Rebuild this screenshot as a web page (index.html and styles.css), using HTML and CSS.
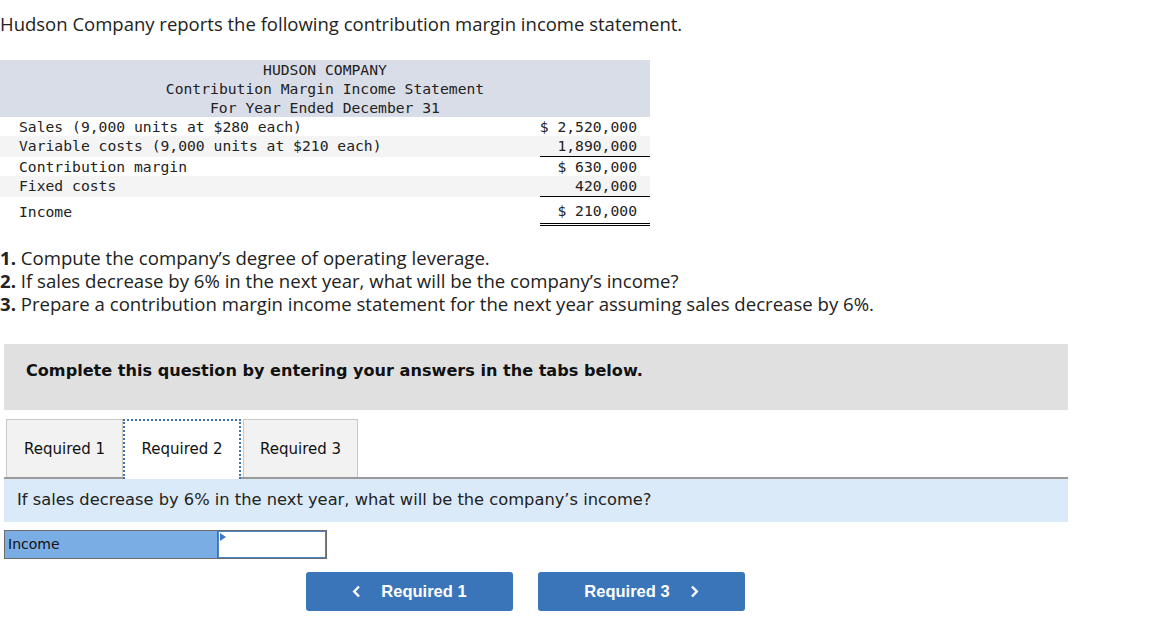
FILE: index.html
```html
<!DOCTYPE html>
<html>
<head>
<meta charset="utf-8">
<link rel="stylesheet" href="styles.css">
</head>
<body>
<p class="intro">Hudson Company reports the following contribution margin income statement.</p>
<table class="stmt">
  <thead>
    <tr><th colspan="2">HUDSON COMPANY<br>Contribution Margin Income Statement<br>For Year Ended December 31</th></tr>
  </thead>
  <tbody>
    <tr><td class="lbl">Sales (9,000 units at $280 each)</td><td class="amt">$ 2,520,000</td></tr>
    <tr class="alt"><td class="lbl">Variable costs (9,000 units at $210 each)</td><td class="amt under">1,890,000</td></tr>
    <tr><td class="lbl">Contribution margin</td><td class="amt">$ 630,000</td></tr>
    <tr class="alt"><td class="lbl">Fixed costs</td><td class="amt under">420,000</td></tr>
    <tr class="last"><td class="lbl">Income</td><td class="amt dbl">$ 210,000</td></tr>
  </tbody>
</table>
<ol class="reqs">
  <li><b>1.</b> Compute the company’s degree of operating leverage.</li>
  <li><b>2.</b> If sales decrease by 6% in the next year, what will be the company’s income?</li>
  <li><b>3.</b> Prepare a contribution margin income statement for the next year assuming sales decrease by 6%.</li>
</ol>
<div class="quiz">
  <div class="banner">Complete this question by entering your answers in the tabs below.</div>
  <div class="tabs">
    <div class="tab t1">Required 1</div>
    <div class="tab t2 active">Required 2</div>
    <div class="tab t3">Required 3</div>
  </div>
  <div class="prompt">If sales decrease by 6% in the next year, what will be the company’s income?</div>
  <div class="answer">
    <div class="alabel">Income</div>
    <div class="ainput"><span class="flag"></span></div>
  </div>
  <div class="nav">
    <button class="btn prev"><svg class="chev" width="9" height="13" viewBox="0 0 9 13"><path d="M7 1.5 L2.2 6.5 L7 11.5" fill="none" stroke="#fff" stroke-width="2.4"/></svg>Required 1</button>
    <button class="btn next">Required 3<svg class="chev" width="9" height="13" viewBox="0 0 9 13"><path d="M2 1.5 L6.8 6.5 L2 11.5" fill="none" stroke="#fff" stroke-width="2.4"/></svg></button>
  </div>
</div>
</body>
</html>
```
FILE: styles.css
```css
body {
  margin: 0;
  background: #fff;
  color: #222;
  font-family: "Open Sans", "Liberation Sans", Arial, sans-serif;
}
.intro {
  margin: 0;
  padding-top: 13px;
  font-size: 18.5px;
  line-height: 22px;
  color: #222;
}
.stmt {
  margin-top: 25px;
  width: 650px;
  border-collapse: collapse;
  font-family: "DejaVu Sans Mono", "Liberation Mono", monospace;
  font-size: 14.7px;
  color: #222;
}
.stmt th {
  background: #d9dde7;
  font-weight: normal;
  line-height: 19px;
  padding: 0;
  text-align: center;
}
.stmt td {
  padding: 0;
  line-height: 19px;
  height: 19px;
  white-space: nowrap;
}
.stmt tr.alt td { background: #f4f4f4; line-height: 20px; height: 20px; }
.stmt .lbl { padding-left: 19px; }
.stmt .amt {
  text-align: right;
  width: 97px;
  padding-right: 13px;
}
.stmt .under { border-bottom: 1px solid #000; }
.stmt tr.last td { padding-top: 4px; padding-bottom: 3px; }
.stmt .dbl { border-bottom: 3px double #000; }
.reqs {
  list-style: none;
  margin: 20px 0 0;
  padding: 0;
  font-size: 18.6px;
  line-height: 23px;
  color: #222;
}
.reqs b { font-weight: bold; }
.quiz {
  margin: 29px 0 0 4px;
  width: 1064px;
  font-family: "DejaVu Sans", Verdana, sans-serif;
}
.banner {
  background: #e0e0e0;
  height: 66px;
  box-sizing: border-box;
  padding: 16px 0 0 22px;
  font-weight: bold;
  font-size: 16.1px;
  line-height: 22px;
  color: #111;
}
.tabs {
  display: flex;
  margin-top: 9px;
  padding-left: 2px;
  border-bottom: 2px solid #9a9a9a;
  height: 58px;
}
.tab {
  box-sizing: border-box;
  height: 58px;
  display: flex;
  align-items: center;
  justify-content: center;
  font-size: 15px;
  color: #111;
  background: #f2f2f2;
  border: 1px solid #c8c8c8;
  border-bottom: none;
}
.t1 { width: 117px; }
.t2 { width: 118px; }
.t3 { width: 115px; margin-left: 2px; }
.tab.active {
  background: #fff;
  border: 2px dotted #3d72b4;
  border-bottom: none;
  height: 60px;
  padding-bottom: 2px;
  position: relative;
  z-index: 1;
}
.prompt {
  background: #dbeaf8;
  height: 43px;
  box-sizing: border-box;
  padding: 11px 0 0 13px;
  font-size: 16.3px;
  line-height: 20px;
  color: #222;
}
.answer {
  display: flex;
  margin-top: 8px;
  height: 29px;
}
.alabel {
  width: 213px;
  box-sizing: border-box;
  background: #7aade3;
  border: 1px solid #6b6b6b;
  border-right: none;
  padding-left: 3px;
  font-size: 14px;
  line-height: 27px;
  color: #111;
}
.ainput {
  width: 110px;
  box-sizing: border-box;
  background: #fff;
  border: 1px solid #6b6b6b;
  box-shadow: inset 0 0 0 1px #4c84c8;
  position: relative;
}
.flag {
  position: absolute;
  left: 2px;
  top: 2px;
  width: 0;
  height: 0;
  border-top: 4px solid transparent;
  border-bottom: 4px solid transparent;
  border-left: 6px solid #3d78c6;
}
.nav {
  display: flex;
  gap: 25px;
  margin: 13px 0 0 302px;
}
.btn {
  width: 207px;
  height: 39px;
  border: none;
  border-radius: 3px;
  background: #3a75b9;
  color: #fff;
  font-family: "Liberation Sans", Arial, sans-serif;
  font-weight: bold;
  font-size: 16.5px;
  display: flex;
  align-items: center;
  justify-content: center;
  padding: 0;
}
.prev .chev { margin-right: 20px; }
.next .chev { margin-left: 20px; }
```
